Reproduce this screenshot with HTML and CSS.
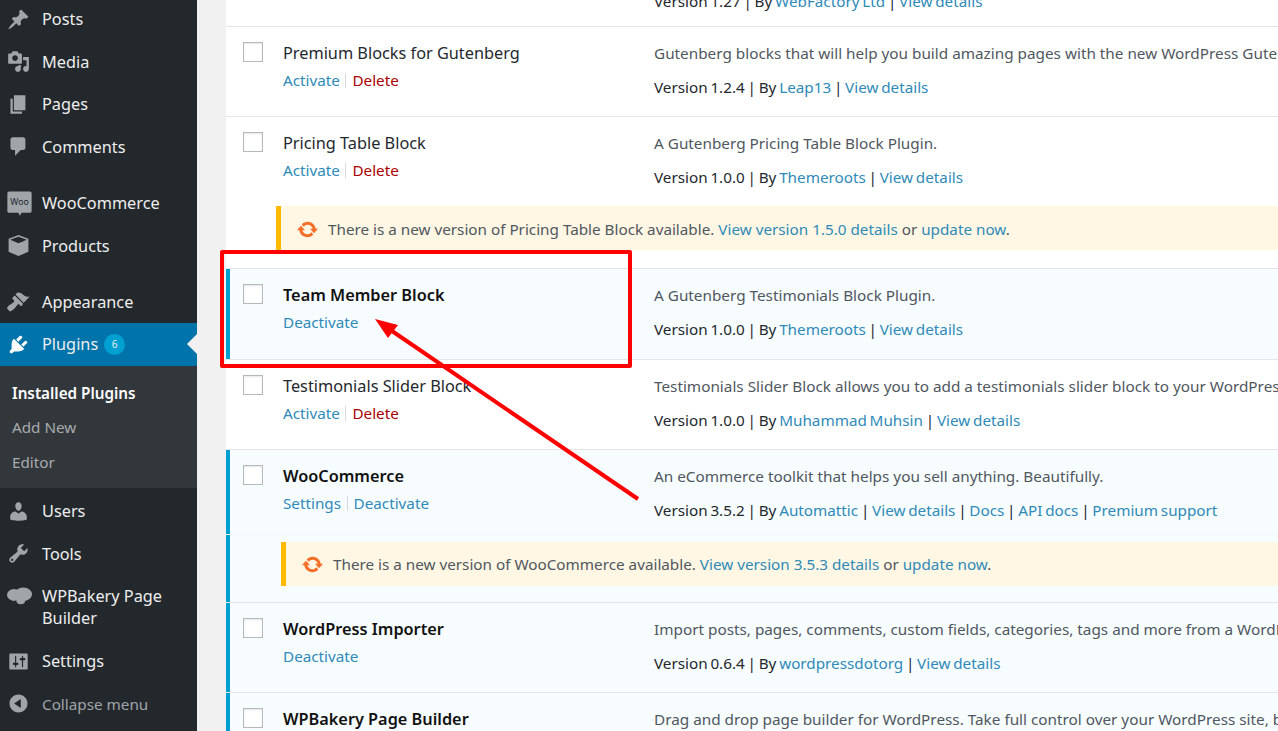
FILE: index.html
```html
<!DOCTYPE html>
<html lang="en">
    <head>
        <meta charset="UTF-8" />
        <title>Plugins</title>
        <link rel="stylesheet" href="styles.css">
    </head>
    <body>
        <div id="page">
            <nav id="sidebar">
                <a class="menu-item"><svg class="menu-icon" viewBox="0 0 20 20"><path d="M10.44 3.02l1.82-1.82 6.36 6.35-1.83 1.82c-1.05-.68-2.48-.57-3.41.36l-.75.75c-.92.93-1.04 2.35-.35 3.41l-1.83 1.82-2.41-2.41-2.8 2.79c-.42.42-3.38 2.71-3.8 2.29s1.86-3.39 2.28-3.81l2.79-2.79L4.1 9.36l1.83-1.82c1.05.69 2.48.57 3.4-.36l.75-.75c.93-.92 1.05-2.35.36-3.41z"/></svg>Posts</a>
                <a class="menu-item"><svg class="menu-icon" viewBox="0 0 20 20"><path d="M13 11V4c0-.55-.45-1-1-1h-1.67L9 1H5L3.67 3H2c-.55 0-1 .45-1 1v7c0 .55.45 1 1 1h10c.55 0 1-.45 1-1zM7 4.5c1.38 0 2.5 1.12 2.5 2.5S8.38 9.5 7 9.5 4.5 8.38 4.5 7 5.62 4.5 7 4.5zM14 6h5v10.5c0 1.38-1.12 2.5-2.5 2.5S14 17.88 14 16.5s1.12-2.5 2.5-2.5c.17 0 .34.02.5.05V9h-3V6zm-4 8.05V13h2v3.5c0 1.38-1.12 2.5-2.5 2.5S7 17.88 7 16.5 8.12 14 9.5 14c.17 0 .34.02.5.05z"/></svg>Media</a>
                <a class="menu-item"><svg class="menu-icon" viewBox="0 0 20 20"><path d="M6 15V2h10v13H6zm-1 1h8v2H3V5h2v11z"/></svg>Pages</a>
                <a class="menu-item"><svg class="menu-icon" viewBox="0 0 20 20"><path d="M5 2h9c1.1 0 2 .9 2 2v7c0 1.1-.9 2-2 2h-2l-5 5v-5H5c-1.1 0-2-.9-2-2V4c0-1.1.9-2 2-2z"/></svg>Comments</a>

                <div class="menu-sep"></div>
                <a class="menu-item"><svg class="menu-icon wide" viewBox="0 0 20 20"><path d="M1.800 .4h16.400c.9 0 1.500.6 1.500 1.500v14c0 .9-.6 1.500-1.500 1.500h-6.400l-1.700 2.300-.9-2.300H1.800c-.9 0-1.500-.6-1.500-1.500v-14C.3 1 .9.4 1.800.4z"/><text class="woo-text" x="10" y="11.500" text-anchor="middle">Woo</text></svg>WooCommerce</a>
                <a class="menu-item"><svg class="menu-icon" viewBox="0 0 20 20"><path d="M10 .8l8.600 3.400v11.200L10 19.200 1.400 15.400V4.200zM2.800 5l7.200 3 7.200-3L10 2.300z"/><path d="M6 3.800l7.600 3" class="box-line"/></svg>Products</a>

                <div class="menu-sep tight"></div>
                <a class="menu-item"><svg class="menu-icon" viewBox="0 0 20 20"><path d="M14.480 11.060L7.410 3.990l1.500-1.500c.5-.56 2.300-.47 3.510.32 1.210.8 1.430 1.280 2.910 2.100 1.180.64 2.450 1.260 4.450.85zm-.71.71L6.700 4.700 4.930 6.470c-.39.39-.39 1.020 0 1.410l1.060 1.060c.39.39.39 1.030 0 1.420-.6.6-1.430 1.110-2.210 1.690-.35.26-.7.53-1.010.84C1.430 13.230.4 14.790 0 16.100l2.550 2.550c1.300-.4 2.860-1.430 4.210-2.780.31-.31.58-.66.84-1.010.58-.78 1.090-1.610 1.690-2.210.39-.39 1.030-.39 1.420 0l1.060 1.060c.39.39 1.020.39 1.410 0z"/></svg>Appearance</a>
                <a class="menu-item current"><svg class="menu-icon" viewBox="0 0 20 20"><path d="M13.110 4.360L9.870 7.600 8 5.730l3.240-3.240c.35-.34 1.050-.2 1.560.32.52.51.66 1.210.31 1.550zm-8 1.770l.91-1.120 9.010 9.010-1.190.84c-.71.71-2.630 1.160-3.820 1.160H6.140L4.900 17.260c-.59.59-1.540.59-2.120 0-.59-.58-.59-1.530 0-2.120l1.240-1.240v-3.880c0-1.130.4-3.190 1.090-3.890zm7.260 3.970l3.240-3.240c.34-.35 1.040-.21 1.550.31.52.51.66 1.210.31 1.550l-3.240 3.250z"/></svg>Plugins<span class="badge">6</span></a>
                <div class="submenu">
                    <a class="sub-item active">Installed Plugins</a>
                    <a class="sub-item">Add New</a>
                    <a class="sub-item">Editor</a>
                </div>
                <a class="menu-item"><svg class="menu-icon" viewBox="0 0 20 20"><path d="M10 9.250c-2.270 0-2.730-3.440-2.730-3.440C7 4.020 7.820 2 9.970 2c2.160 0 2.980 2.020 2.710 3.810 0 0-.41 3.440-2.680 3.440zm0 2.570L12.720 10c2.390 0 4.520 2.330 4.520 4.530v2.490s-3.650 1.130-7.240 1.130c-3.650 0-7.240-1.130-7.240-1.130v-2.490c0-2.250 1.940-4.480 4.470-4.480z"/></svg>Users</a>
                <a class="menu-item"><svg class="menu-icon" viewBox="0 0 20 20"><path d="M16.680 9.770c-1.340 1.340-3.300 1.670-4.950.99l-5.410 6.520c-.99.99-2.590.99-3.580 0s-.99-2.59 0-3.570l6.520-5.420c-.68-1.650-.35-3.610.99-4.950 1.280-1.280 3.120-1.620 4.720-1.060l-2.890 2.890 2.820 2.820 2.860-2.870c.53 1.580.18 3.390-1.080 4.650zM3.810 16.210c.4.39 1.040.39 1.430 0 .4-.4.4-1.040 0-1.430-.39-.4-1.030-.4-1.430 0-.39.39-.39 1.030 0 1.430z"/></svg>Tools</a>
                <a class="menu-item two-line"><svg class="menu-icon wide" viewBox="0 0 20 20"><ellipse cx="5.500" cy="9.500" rx="5.500" ry="4.800"/><ellipse cx="13" cy="9" rx="7" ry="5.500"/><ellipse cx="11" cy="14" rx="3.500" ry="3"/></svg><span>WPBakery Page<br>Builder</span></a>
                <a class="menu-item"><svg class="menu-icon" viewBox="0 0 20 20"><path d="M18 16V4c0-.55-.45-1-1-1H3c-.55 0-1 .45-1 1v12c0 .55.45 1 1 1h14c.55 0 1-.45 1-1zM8 11h1c.55 0 1 .45 1 1s-.45 1-1 1H8v1.500c0 .28-.22.5-.5.5s-.5-.22-.5-.5V13H6c-.55 0-1-.45-1-1s.45-1 1-1h1V5.500c0-.28.22-.5.5-.5s.5.22.5.5V11zm5-2h-1c-.55 0-1-.45-1-1s.45-1 1-1h1V5.500c0-.28.22-.5.5-.5s.5.22.5.5V7h1c.55 0 1 .45 1 1s-.45 1-1 1h-1v5.500c0 .28-.22.5-.5.5s-.5-.22-.5-.5V9z"/></svg>Settings</a>
                <a class="menu-item collapse"><svg class="menu-icon" viewBox="0 0 20 20"><path d="M10 2.160c4.330 0 7.840 3.510 7.840 7.840s-3.510 7.840-7.840 7.840S2.160 14.330 2.160 10 5.710 2.160 10 2.160zm2 11.720V6.120L6.180 9.970z"/></svg>Collapse menu</a>
            </nav>

            <main id="content">
                <div class="plugins">
                    <div class="row first">
                        <div class="check"><span class="box"></span></div>
                        <div class="name"></div>
                        <div class="desc">
                            <p class="summary"></p>
                            <p class="meta">Version 1.27 | By <a>WebFactory Ltd</a> | <a>View details</a></p>
                        </div>
                    </div>

                    <div class="row">
                        <div class="check"><span class="box"></span></div>
                        <div class="name">
                            <div class="title">Premium Blocks for Gutenberg</div>
                            <div class="actions"><a>Activate</a><i></i><a class="del">Delete</a></div>
                        </div>
                        <div class="desc">
                            <p class="summary">Gutenberg blocks that will help you build amazing pages with the new WordPress Gutenberg editor.</p>
                            <p class="meta">Version 1.2.4 | By <a>Leap13</a> | <a>View details</a></p>
                        </div>
                    </div>

                    <div class="row">
                        <div class="check"><span class="box"></span></div>
                        <div class="name">
                            <div class="title">Pricing Table Block</div>
                            <div class="actions"><a>Activate</a><i></i><a class="del">Delete</a></div>
                        </div>
                        <div class="desc">
                            <p class="summary">A Gutenberg Pricing Table Block Plugin.</p>
                            <p class="meta">Version 1.0.0 | By <a>Themeroots</a> | <a>View details</a></p>
                        </div>
                    </div>
                    <div class="update-row pricing">
                        <div class="notice">
                            <svg class="update-icon" viewBox="0 0 20 20"><path d="M10.200 3.280c3.530 0 6.430 2.610 6.920 6h2.080l-3.500 4-3.500-4h2.320c-.45-1.970-2.210-3.450-4.320-3.450-1.450 0-2.730.71-3.540 1.780L4.950 5.660C6.230 4.200 8.110 3.280 10.200 3.280zm-.4 13.440c-3.520 0-6.430-2.610-6.920-6H.8l3.500-4c1.170 1.330 2.330 2.670 3.500 4H5.480c.45 1.970 2.210 3.450 4.320 3.450 1.450 0 2.730-.71 3.540-1.780l1.710 1.950c-1.280 1.460-3.150 2.380-5.250 2.380z"/></svg>
                            <span>There is a new version of Pricing Table Block available. <a>View version 1.5.0 details</a> or <a>update now</a>.</span>
                        </div>
                    </div>

                    <div class="row on team">
                        <div class="check"><span class="box"></span></div>
                        <div class="name">
                            <div class="title">Team Member Block</div>
                            <div class="actions"><a>Deactivate</a></div>
                        </div>
                        <div class="desc">
                            <p class="summary">A Gutenberg Testimonials Block Plugin.</p>
                            <p class="meta">Version 1.0.0 | By <a>Themeroots</a> | <a>View details</a></p>
                        </div>
                    </div>

                    <div class="row">
                        <div class="check"><span class="box"></span></div>
                        <div class="name">
                            <div class="title">Testimonials Slider Block</div>
                            <div class="actions"><a>Activate</a><i></i><a class="del">Delete</a></div>
                        </div>
                        <div class="desc">
                            <p class="summary">Testimonials Slider Block allows you to add a testimonials slider block to your WordPress site.</p>
                            <p class="meta">Version 1.0.0 | By <a>Muhammad Muhsin</a> | <a>View details</a></p>
                        </div>
                    </div>

                    <div class="row on short">
                        <div class="check"><span class="box"></span></div>
                        <div class="name">
                            <div class="title">WooCommerce</div>
                            <div class="actions"><a>Settings</a><i></i><a>Deactivate</a></div>
                        </div>
                        <div class="desc">
                            <p class="summary">An eCommerce toolkit that helps you sell anything. Beautifully.</p>
                            <p class="meta">Version 3.5.2 | By <a>Automattic</a> | <a>View details</a> | <a>Docs</a> | <a>API docs</a> | <a>Premium support</a></p>
                        </div>
                    </div>
                    <div class="update-row on woo">
                        <div class="notice">
                            <svg class="update-icon" viewBox="0 0 20 20"><path d="M10.200 3.280c3.530 0 6.430 2.610 6.920 6h2.080l-3.500 4-3.500-4h2.320c-.45-1.970-2.210-3.450-4.320-3.450-1.450 0-2.730.71-3.540 1.780L4.950 5.660C6.230 4.200 8.110 3.280 10.200 3.280zm-.4 13.440c-3.520 0-6.430-2.610-6.920-6H.8l3.500-4c1.170 1.330 2.330 2.670 3.500 4H5.480c.45 1.970 2.210 3.450 4.320 3.450 1.450 0 2.730-.71 3.540-1.780l1.710 1.950c-1.280 1.460-3.150 2.380-5.250 2.380z"/></svg>
                            <span>There is a new version of WooCommerce available. <a>View version 3.5.3 details</a> or <a>update now</a>.</span>
                        </div>
                    </div>

                    <div class="row on">
                        <div class="check"><span class="box"></span></div>
                        <div class="name">
                            <div class="title">WordPress Importer</div>
                            <div class="actions"><a>Deactivate</a></div>
                        </div>
                        <div class="desc">
                            <p class="summary">Import posts, pages, comments, custom fields, categories, tags and more from a WordPress export file.</p>
                            <p class="meta">Version 0.6.4 | By <a>wordpressdotorg</a> | <a>View details</a></p>
                        </div>
                    </div>

                    <div class="row on">
                        <div class="check"><span class="box"></span></div>
                        <div class="name">
                            <div class="title">WPBakery Page Builder</div>
                        </div>
                        <div class="desc">
                            <p class="summary">Drag and drop page builder for WordPress. Take full control over your WordPress site, build any layout.</p>
                        </div>
                    </div>
                </div>
            </main>

            <div class="callout"></div>
            <svg class="arrow" viewBox="0 0 1278 731">
                <line x1="638" y1="499" x2="392" y2="331"/>
                <polygon points="375,319 398,325 388,338"/>
            </svg>
        </div>
    </body>
</html>
```

FILE: styles.css
```css
:root {
    --blue: #0073aa;
    --link: #2e8ab8;
    --on-bar: #00a0d2;
}
html, body {
    margin: 0;
    height: 100%;
    overflow: hidden;
}
body {
    font-family: "Noto Sans", sans-serif;
    font-size: 15.25px;
    background-color: #f1f1f1;
}
#page {
    position: relative;
    display: flex;
    width: 1278px;
    height: 731px;
    overflow: hidden;
}

/* left menu */
#sidebar {
    flex: 0 0 197px;
    background-color: #23282d;
    color: #eeeeee;
    margin-top: -2px;
}
#sidebar a {
    color: inherit;
}
.menu-item {
    position: relative;
    display: flex;
    align-items: center;
    height: 42.5px;
    padding-left: 7px;
    box-sizing: border-box;
    font-size: 16.3px;
}
.menu-icon {
    flex: none;
    width: 23px;
    height: 23px;
    margin-right: 12px;
    fill: #a0a5aa;
}
.menu-icon.wide {
    width: 25px;
    height: 25px;
    margin-right: 10px;
}
.woo-text {
    font-size: 7px;
    fill: #23282d;
}
.box-line {
    fill: none;
    stroke: #23282d;
    stroke-width: 0.8;
}
.menu-sep {
    height: 14px;
}
.menu-sep.tight {
    height: 13.5px;
}
.menu-item.current {
    background-color: var(--blue);
    color: #ffffff;
}
.current .menu-icon {
    fill: #ffffff;
}
.current::after {
    content: "";
    position: absolute;
    right: 0;
    top: 50%;
    margin-top: -10px;
    border: 10px solid transparent;
    border-right-color: #f1f1f1;
    border-left-width: 0;
}
.badge {
    width: 21px;
    height: 21px;
    margin-left: 6px;
    border-radius: 50%;
    background-color: #00a0d2;
    font-size: 10px;
    line-height: 21px;
    text-align: center;
}
.submenu {
    background-color: #32373c;
    padding: 10px 0 9px;
    margin-bottom: 2px;
}
.sub-item {
    display: block;
    height: 34.5px;
    line-height: 34.5px;
    padding-left: 12px;
}
#sidebar .sub-item {
    color: #a8abae;
}
#sidebar .sub-item.active {
    color: #ffffff;
    font-weight: 600;
}
.menu-item.two-line {
    height: 65px;
    padding-top: 10px;
    line-height: 22px;
    align-items: flex-start;
}
.two-line .menu-icon {
    margin-top: -2px;
}
#sidebar .collapse {
    color: #a0a5aa;
    font-size: 15.25px;
}

/* plugin table */
#content {
    flex: 1;
    min-width: 0;
    padding-left: 29px;
    overflow: hidden;
}
.plugins {
    margin-top: -60px;
    background-color: #ffffff;
}
.row {
    display: grid;
    grid-template-columns: 57px 371px 1fr;
    height: 90px;
    box-sizing: border-box;
    border-top: 1px solid #e5e5e5;
    padding-top: 13px;
    white-space: nowrap;
}
.row.first {
    height: 86px;
}
.row.team {
    height: 91px;
}
.row.short {
    height: 85px;
}
.on {
    background-color: #f7fcfe;
    box-shadow: inset 4px 0 0 var(--on-bar);
}
.check {
    padding: 2px 0 0 17px;
}
.box {
    display: block;
    width: 18px;
    height: 18px;
    border: 1px solid #b4b9be;
    background-color: #ffffff;
    box-shadow: inset 0 1px 2px rgba(0, 0, 0, 0.1);
}
.title {
    line-height: 26px;
    font-size: 16.3px;
    color: #23282d;
}
.on .title {
    font-weight: 600;
    color: #111111;
}
.actions {
    display: flex;
    align-items: center;
    margin-top: 1px;
    line-height: 26px;
}
.actions i {
    width: 1px;
    height: 15px;
    margin: 0 6px 0 5.5px;
    background-color: #d5dade;
}
a {
    color: var(--link);
}
a.del {
    color: #a00;
}
.desc {
    overflow: hidden;
    color: #50575e;
}
.desc p {
    margin: 0;
    line-height: 26px;
}
.desc .summary {
    min-height: 26px;
    font-size: 15.3px;
}
.desc .meta {
    margin-top: 8px;
    color: #23282d;
    word-spacing: -1.2px;
}

/* update notices */
.update-row {
    height: 62px;
    box-sizing: border-box;
}
.update-row.pricing {
    padding-left: 50px;
}
.pricing .notice {
    padding-top: 2px;
}
.update-row.woo {
    height: 68px;
    padding: 7px 0 0 55px;
    border-top: 1px solid #f3f8fa;
}
.notice {
    display: flex;
    align-items: center;
    height: 44px;
    box-sizing: border-box;
    border-left: 5px solid #ffb900;
    background-color: #fff6e3;
    padding-left: 15px;
    color: #50575e;
    white-space: nowrap;
}
.update-icon {
    flex: none;
    width: 23px;
    height: 23px;
    margin-right: 9px;
    fill: #f56e28;
}

/* annotation drawn over the screenshot */
.callout {
    position: absolute;
    left: 220px;
    top: 250px;
    width: 412px;
    height: 118px;
    box-sizing: border-box;
    border: 4px solid #ff0000;
    border-radius: 2px;
}
.arrow {
    position: absolute;
    left: 0;
    top: 0;
    width: 1278px;
    height: 731px;
}
.arrow line {
    stroke: #ff0000;
    stroke-width: 4;
}
.arrow polygon {
    fill: #ff0000;
}
```
